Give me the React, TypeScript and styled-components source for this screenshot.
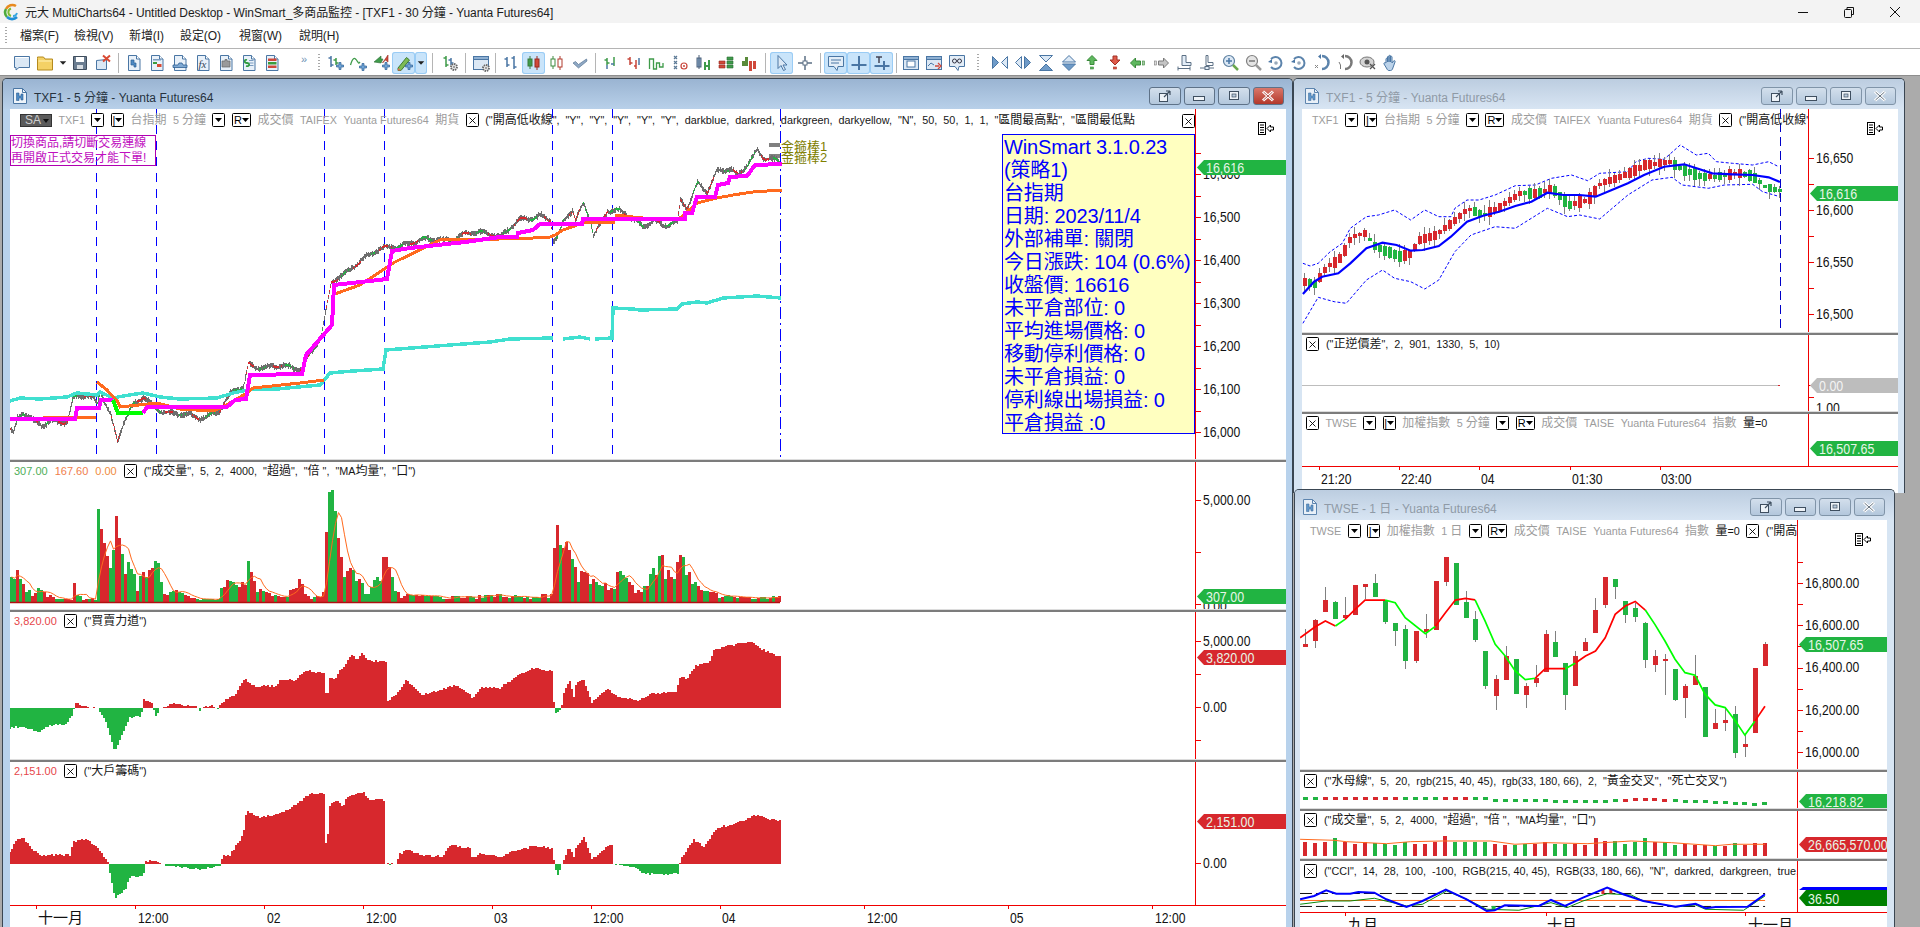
import React from 'react';
import styled, { createGlobalStyle } from 'styled-components';

type P = [number, number];
const RED = '#d7282d';
const GREEN = '#21b442';
const FONT = `"Liberation Sans", "Noto Sans CJK TC", sans-serif`;

/* ---------- data helpers ---------- */
const rng = (seed: number) => () => {
  seed |= 0; seed = (seed + 0x6d2b79f5) | 0;
  let t = Math.imul(seed ^ (seed >>> 15), 1 | seed);
  t = (t + Math.imul(t ^ (t >>> 7), 61 | t)) ^ t;
  return ((t ^ (t >>> 14)) >>> 0) / 4294967296;
};
const conv = (ox: number, oy: number, sx: number, sy: number) => (pts: P[]): P[] =>
  pts.map(([x, y]) => [ox + x / sx, oy + y / sy] as P);
const z8 = conv(0, 600, 3, 3);
const z10 = conv(1290, 120, 2.486, 3);
const z11 = conv(1290, 540, 2.486, 3);
const z12 = conv(500, 580, 1.96, 3);
const z6 = conv(1290, 750, 2.486, 3);
const lerp = (s: P[], x: number) => {
  if (x <= s[0][0]) return s[0][1];
  for (let i = 1; i < s.length; i++) {
    if (x <= s[i][0]) {
      const [a, b] = s[i - 1];
      const [c, d] = s[i];
      return c === a ? d : b + ((d - b) * (x - a)) / (c - a);
    }
  }
  return s[s.length - 1][1];
};
const poly = (s: P[]) => 'M' + s.map((p) => `${p[0].toFixed(1)} ${p[1].toFixed(1)}`).join('L');

/* ---------- main price chart ---------- */
const mPrice: P[] = [[10,427],[13,432],[17,417],[23,412],[33,423],[42,427],[50,420],[67,420],[73,398],[87,397],[97,403],[100,390],[110,413],[117,440],[123,423],[133,407],[143,397],[157,407],[173,415],[200,417],[220,410],[233,392],[243,387],[248,363],[267,368],[300,367],[321,337],[331,284],[355,263],[392,245],[441,239],[490,232],[500,235],[517,223],[533,218],[540,214],[550,218],[553,240],[557,238],[563,223],[572,212],[575,222],[583,203],[590,218],[593,233],[600,223],[607,211],[620,213],[633,218],[643,225],[653,220],[663,228],[677,222],[680,200],[687,205],[697,182],[707,193],[717,173],[730,168],[738,173],[757,153],[763,160],[777,160],[781,163]];
const mMag1: P[] = [[10,419],[75,419],[77,408],[99,408],[101,400],[113,400]];
const mGreen: P[] = [[113,400],[118,413],[143,413]];
const mMag2: P[] = [[143,413],[147,407],[227,407],[235,400],[246,399],[250,375],[302,374],[305,360],[306,355],[332,325],[334,285],[387,279],[392,251],[410,248],[465,242],[500,237],[517,237],[518,233],[533,230],[540,224],[582,224],[583,219],[685,219],[685,213],[692,213],[697,197],[715,197],[718,185],[728,183],[730,177],[747,176],[755,165],[782,164]];
const mOr1: P[] = [[10,419],[77,417],[96,417]];
const mOr2: P[] = [[97,382],[107,390],[118,402],[120,407],[157,403],[180,409],[213,411],[223,407],[247,393],[253,388],[300,383],[324,380]];
const mOr3: P[] = [[332,295],[360,285],[395,262],[440,240],[500,239],[517,239],[550,237],[555,235],[563,230],[580,224],[587,222],[615,222]];
const mOr4: P[] = [[615,215],[633,217],[643,218],[680,218],[697,203],[717,198],[733,195],[753,192],[782,190]];
const mCy1: P[] = [[10,401],[20,398],[40,399],[67,397],[77,393],[97,395],[100,392],[113,398],[123,396],[143,393],[160,397],[180,399],[217,398],[233,393],[253,389],[277,389],[320,385],[330,373],[353,371],[383,369],[386,350],[450,345],[490,342],[510,339],[553,338]];
const mCy2: P[] = [[563,339],[580,337],[590,339]];
const mCy3: P[] = [[595,339],[612,338],[613,308],[633,309],[640,310],[677,309],[682,304],[697,302],[707,303],[723,298],[757,296],[781,298]];

const miniBars = (() => {
  const r = rng(7);
  let w = '', u = '', d = '';
  for (let x = 10; x <= 780; x += 1) {
    const wob = Math.sin(x / 3.1) * 1.6 + Math.sin(x / 7.7) * 2.2;
    const c = lerp(mPrice, x) + wob;
    const hi = c - 1 - r() * 2.5;
    const lo = c + 1 + r() * 2.5;
    w += `M${x} ${hi.toFixed(0)}V${lo.toFixed(0)}`;
    const b = `M${x} ${(c - 1).toFixed(0)}V${(c + 1).toFixed(0)}`;
    const k = Math.sin(x / 4.3) + (r() - 0.5);
    if (k > 0.55) u += b; else if (k < -0.65) d += b;
  }
  return { w, u, d };
})();

/* ---------- volume ---------- */
const volEnv: P[] = [[10,25],[15,35],[20,20],[30,10],[35,15],[50,6],[60,3],[70,3],[72,25],[75,8],[85,3],[94,5],[96,100],[100,73],[105,50],[110,30],[115,86],[120,50],[125,40],[130,40],[135,20],[143,32],[150,32],[156,45],[162,8],[175,12],[190,4],[200,3],[218,3],[222,25],[230,20],[243,20],[245,48],[250,30],[255,15],[265,10],[280,5],[288,5],[290,20],[297,25],[310,3],[322,10],[327,110],[332,112],[336,70],[340,45],[345,30],[350,35],[360,20],[370,15],[382,45],[385,45],[395,12],[400,8],[430,6],[470,6],[500,8],[530,5],[550,10],[555,84],[560,50],[565,60],[575,32],[585,30],[600,15],[618,32],[628,20],[640,10],[660,50],[670,25],[680,50],[690,25],[700,12],[720,8],[740,5],[760,5],[780,6]];
const VOL_BASE = 602;
const volume = (() => {
  const r = rng(21);
  const red: string[] = [];
  const grn: string[] = [];
  const ma: P[] = [];
  const hs: number[] = [];
  for (let x = 10; x <= 778; x += 3) {
    const k = r();
    const env = lerp(volEnv, x);
    const h = env * (env > 42 || k > 0.4 ? 1 : 0.45 + k);
    hs.push(h);
    const s = `M${x + 1.5} ${VOL_BASE}V${(VOL_BASE - h).toFixed(0)}`;
    (r() > 0.45 ? red : grn).push(s);
    const w = hs.slice(-5);
    ma.push([x + 1.5, VOL_BASE - (w.reduce((a, b) => a + b, 0) / w.length)]);
  }
  return { red: red.join(''), grn: grn.join(''), ma };
})();

/* ---------- area panes ---------- */
const force: P[] = [
  ...z8([[30,385],[60,380],[120,395],[150,375],[200,372],[218,345],[222,325],[226,312],[265,318],[270,323],[295,325],[320,370],[345,455],[370,395],[390,350],[420,350],[428,330],[430,298],[456,310],[468,348],[480,325],[520,310],[590,318],[600,330],[610,322],[640,315],[650,330],[670,305],[710,280],[735,235],[770,265],[790,255],[830,260],[840,240],[890,240],[905,220],[930,213],[975,220],[978,280],[988,280],[990,235],[1005,240],[1020,210],[1030,200],[1055,165],[1075,180],[1088,155],[1100,180],[1158,187],[1160,305],[1190,280],[1220,240],[1265,285],[1300,275],[1350,260],[1365,255],[1410,280],[1418,300],[1445,260]]),
  ...z12([[0,325],[30,290],[70,262],[105,275],[106,383],[106,425],[110,400],[120,388],[125,340],[137,300],[145,355],[150,305],[165,300],[180,370],[200,340],[212,325],[230,348],[270,362],[300,340],[345,335],[355,285],[365,300],[385,255],[410,250],[420,210],[445,198],[490,186],[520,213],[552,232]]),
];
const chips: P[] = [
  ...z8([[30,755],[50,720],[70,712],[100,750],[120,765],[210,765],[220,725],[260,715],[295,745],[320,780],[325,792],[345,895],[375,870],[395,825],[415,835],[432,820],[435,785],[460,780],[490,792],[520,800],[600,808],[660,798],[670,765],[690,765],[730,705],[740,632],[770,650],[820,648],[860,630],[890,615],[900,605],[930,580],[975,580],[978,730],[985,700],[990,615],[1010,600],[1030,620],[1040,590],[1090,577],[1110,600],[1150,597],[1157,615],[1158,792],[1190,792],[1200,762],[1220,750],[1265,765],[1330,770],[1350,735],[1410,745],[1418,778],[1440,760]]),
  ...z12([[0,830],[30,812],[70,797],[105,805],[106,851],[113,885],[122,851],[125,845],[135,798],[145,830],[150,800],[165,772],[180,838],[200,815],[213,793],[222,800],[222,851],[260,860],[280,880],[320,885],[352,880],[353,840],[380,780],[400,800],[425,745],[465,728],[505,703],[525,717],[552,722]]),
];
const area = (s: P[], zero: number, seed: number) => {
  const r = rng(seed);
  let up = '', dn = '';
  for (let x = 10; x <= 781; x += 2) {
    const y = Math.round(lerp(s, x) + (r() - 0.5) * 2);
    if (y < zero) up += `M${x} ${zero}V${y}`;
    else if (y > zero) dn += `M${x} ${zero}V${y}`;
  }
  return { up, dn };
};
const forceA = area(force, 708, 3);
const chipsA = area(chips, 864, 5);

/* ---------- window 2 ---------- */
const w2Mid = z10([[32,522],[60,485],[80,470],[120,460],[150,430],[190,385],[230,368],[265,375],[300,392],[330,390],[370,378],[400,350],[440,305],[480,287],[520,275],[560,258],[600,245],[640,218],[680,225],[720,225],[760,230],[800,210],[840,190],[880,165],[930,140],[980,133],[1050,160],[1100,163],[1150,165],[1190,172],[1218,186]]);
const w2Up = z10([[32,430],[50,438],[70,430],[100,395],[130,370],[150,325],[190,290],[220,285],[260,270],[300,300],[335,270],[370,290],[400,290],[410,265],[440,240],[470,240],[510,225],[560,197],[610,195],[650,175],[700,165],[740,182],[770,160],[840,155],[860,125],[890,115],[930,118],[970,75],[1010,105],[1040,100],[1060,125],[1100,130],[1150,135],[1190,125],[1215,140]]);
const w2Lo = z10([[32,610],[70,532],[110,545],[140,550],[190,480],[230,450],[260,475],[300,485],[335,507],[370,480],[410,395],[450,345],[510,320],[560,325],[640,265],[690,290],[720,285],[770,297],[840,225],[900,180],[950,172],[975,195],[1040,205],[1080,195],[1150,193],[1175,215],[1218,230]]);
const w2Path = z10([[36,485],[60,495],[90,440],[120,420],[135,390],[150,350],[185,340],[210,380],[250,400],[270,410],[300,400],[320,360],[360,345],[410,300],[440,265],[480,285],[520,260],[570,220],[620,220],[650,205],[690,255],[740,240],[770,190],[810,175],[850,155],[880,135],[940,125],[970,145],[1020,170],[1060,170],[1110,158],[1150,170],[1180,200],[1218,212]]);
const w2Candles = (() => {
  const r = rng(11);
  const out: { x: number; hi: number; lo: number; top: number; bot: number; up: boolean }[] = [];
  let prev = lerp(w2Path, 1304);
  for (let x = 1304; x <= 1780; x += 5) {
    const c = lerp(w2Path, x);
    const up = c < prev + (r() - 0.5) * 3;
    const h = 3 + r() * 9;
    const top = Math.round(c - h / 2);
    const bot = Math.round(c + h / 2);
    out.push({ x, top, bot, up, hi: top - Math.round(r() * 8), lo: bot + Math.round(r() * 8) });
    prev = c;
  }
  return out;
})();

/* ---------- window 3 ---------- */
const w3Raw: [number, number, number, number, number, 'r' | 'g'][] = [
  [38,265,318,309,317,'r'],[63,235,320,237,299,'r'],[88,138,212,178,212,'r'],[113,181,234,184,233,'g'],[137,168,235,222,232,'r'],[162,133,222,133,222,'r'],[187,129,175,129,138,'r'],[212,99,168,127,167,'g'],[237,178,248,180,243,'g'],[262,247,315,247,269,'g'],[287,252,383,264,359,'g'],[312,270,365,270,359,'r'],[337,218,290,265,272,'r'],[362,120,267,120,266,'r'],[387,48,134,48,122,'r'],[412,65,192,65,192,'g'],[437,150,230,183,230,'g'],[461,210,303,235,297,'g'],[486,330,443,330,434,'g'],[511,402,506,414,464,'r'],[536,315,417,345,417,'r'],[561,354,458,354,458,'g'],[586,425,500,435,461,'r'],[611,372,437,410,425,'r'],[636,267,392,280,392,'r'],[661,270,348,303,348,'g'],[686,366,506,366,461,'g'],[711,330,434,345,434,'r'],[736,292,330,303,329,'r'],[761,170,275,207,275,'r'],[785,108,200,108,191,'r'],[810,113,173,113,137,'g'],[835,180,245,180,221,'g'],[860,185,243,201,228,'g'],[885,243,380,246,356,'g'],[909,326,392,345,371,'r'],[934,340,462,354,360,'r'],[959,384,480,384,477,'g'],[984,430,530,435,470,'r'],[1009,342,430,405,431,'r'],[1034,438,588,438,588,'g'],[1059,503,565,546,563,'r'],[1084,500,570,537,545,'r'],[1109,495,650,519,635,'g'],[1133,583,648,609,617,'r'],[1158,381,575,381,575,'r'],[1183,303,375,309,375,'r'],
];
const maSegs: { c: string; p: P[] }[] = [
  { c: '#ff0000', p: [[25,290],[62,258],[88,240],[113,255]] },
  { c: '#00ff00', p: [[113,255],[137,235]] },
  { c: '#ff0000', p: [[137,235],[162,205],[187,177],[237,177]] },
  { c: '#00ff00', p: [[237,177],[262,185],[287,230],[337,278],[362,256]] },
  { c: '#ff0000', p: [[362,256],[387,215],[412,177],[437,172],[461,176]] },
  { c: '#00ff00', p: [[461,176],[486,240],[511,310],[536,345],[561,390],[586,416],[611,412]] },
  { c: '#ff0000', p: [[611,412],[636,383],[686,383]] },
  { c: '#00ff00', p: [[686,383],[711,366]] },
  { c: '#ff0000', p: [[711,366],[736,345],[761,330],[785,290],[810,220],[835,195],[860,181],[885,207]] },
  { c: '#00ff00', p: [[885,207],[909,250],[934,300],[959,355],[984,395],[1009,403],[1034,460],[1059,492],[1084,500],[1109,540],[1133,583],[1158,541]] },
  { c: '#ff0000', p: [[1158,541],[1183,496]] },
];
const jellyY = [141,141,141,141,141,141,141,141,141,141,142,142,142,142,141,141,141,141,141,146,147,148,148,148,148,149,149,149,150,150,149,147,146,145,143,143,146,146,149,150,151,152,154,155,157,158,155];
const jellyG = new Set([0,1,10,11,12,13,17,18,19,20,21,22,23,24,25,26,27,28,29,30,31,37,38,39,40,41,42,43,44,45,46]);
const w3Xs = w3Raw.map((c) => 1290 + c[0] / 2.486);
const volTops = [272,275,272,262,272,280,274,276,280,282,274,278,278,274,255,272,272,272,272,278,282,282,280,278,273,278,278,278,282,262,270,270,280,272,262,274,274,282,278,282,282,285,285,277,281,277,277];
const volCols = 'rrrgrrrggggrrrrggggrrggrrggrrrrggggrggrrrgrgrrr';
const volMa = z6([[25,265],[110,268],[140,272],[240,278],[300,272],[380,270],[500,270],[560,280],[640,275],[740,278],[850,270],[950,275],[1060,284],[1100,280],[1183,280]]);
const cciBlue = z6([[25,445],[60,435],[90,418],[115,428],[150,428],[170,423],[210,425],[240,445],[290,468],[330,450],[388,416],[440,445],[490,480],[510,478],[535,463],[620,465],[650,447],[685,465],[730,440],[790,410],[830,430],[880,450],[960,467],[1010,458],[1035,472],[1060,468],[1140,467],[1183,430]]);
const cciGreen = z6([[25,460],[90,450],[150,450],[210,442],[290,465],[330,460],[390,420],[440,445],[490,475],[570,478],[650,455],[690,470],[730,450],[790,428],[850,432],[880,450],[960,468],[1010,462],[1035,475],[1130,478],[1183,435]]);

/* ---------- styles ---------- */
const Global = createGlobalStyle`
  html, body { margin: 0; height: 100%; overflow: hidden; background: #ababab; }
  * { box-sizing: border-box; }
`;
const Page = styled.div`
  width: 1920px; height: 927px; overflow: hidden; display: flex; flex-direction: column;
  font-family: ${FONT}; background: #ababab; color: #000;
`;
const TitleBar = styled.header`
  height: 23px; background: #f3f3f3; display: flex; align-items: center; padding-left: 3px;
  font-size: 12px; color: #1c1c1c; flex: none;
`;
const AppTitle = styled.span`
  margin-left: 5px; white-space: pre; letter-spacing: -0.06px;
`;
const Caption = styled.div`
  margin-left: auto; display: flex; height: 100%; margin-right: 2px;
`;
const CaptionBtn = styled.div`
  width: 46px; display: flex; align-items: center; justify-content: center;
`;
const MenuBar = styled.nav`
  height: 26px; background: #fff; border-bottom: 1px solid #b4b4b4; display: flex; align-items: center;
  padding: 0 0 2px 20px; flex: none; position: relative; font-size: 12px; color: #222;
`;
const MenuItem = styled.span<{ $w: number }>`
  width: ${(p) => p.$w}px; white-space: nowrap; letter-spacing: -0.1px;
`;
const Grip = styled.i`
  display: block; width: 2px; height: 18px;
  background: repeating-linear-gradient(#a8a8a8 0 1px, transparent 1px 3px);
`;
const MenuGrip = styled(Grip)`
  position: absolute; left: 5px; top: 4px;
`;
const ToolBar = styled.div`
  height: 27px; background: #fff; border-bottom: 1px solid #8e8e8e; display: flex; align-items: center;
  padding: 1px 0 0 10.5px; flex: none;
`;
const Tool = styled.div<{ $hl?: boolean; $w?: number }>`
  width: ${(p) => p.$w ?? 23}px; height: 22px; display: flex; align-items: center; justify-content: center;
  border-radius: 3px; flex: none;
  ${(p) => p.$hl && 'background: #c9e4fa; box-shadow: inset 0 0 0 1px #9accf5;'}
`;
const ToolSep = styled.div<{ $w: number }>`
  width: ${(p) => p.$w}px; height: 20px; flex: none; display: flex; justify-content: center;
  &::before { content: ''; width: 1px; background: #b5b5b5; }
`;
const ToolGrip = styled.div<{ $w: number }>`
  width: ${(p) => p.$w}px; flex: none; display: flex; justify-content: center;
`;
const Chevron = styled.span`
  width: 31.5px; font-size: 11px; color: #6d8fb3; text-align: right; padding-right: 8px; flex: none; margin-top: -8px;
`;
const Mdi = styled.main`
  position: relative; flex: 1; background: #ababab; overflow: hidden;
`;
const Win = styled.section<{ $l: number; $t: number; $w: number; $h: number; $active?: boolean; $pl: number; $pr: number; $z: number }>`
  position: absolute; left: ${(p) => p.$l}px; top: ${(p) => p.$t}px; width: ${(p) => p.$w}px; height: ${(p) => p.$h}px;
  z-index: ${(p) => p.$z};
  padding: 0 ${(p) => p.$pr}px 0 ${(p) => p.$pl}px;
  background: ${(p) => (p.$active ? '#b8d2ec' : '#d7e5f3')};
  border: 1px solid #3a4652; border-bottom: 0; border-radius: 5px 5px 0 0;
  display: flex; flex-direction: column; overflow: hidden;
`;
const WinTitle = styled.div<{ $active?: boolean; $pl: number; $pb: number }>`
  height: 30px; flex: none; margin: 0 -${(p) => p.$pb}px 0 -${(p) => p.$pl}px; padding: 4px ${(p) => p.$pb}px 0 ${(p) => p.$pl + 1}px;
  display: flex; align-items: center; font-size: 12px; white-space: pre;
  background: linear-gradient(${(p) => (p.$active ? '#9ab4d2, #b8d0e9' : '#bccde0, #d8e5f3')});
  color: ${(p) => (p.$active ? '#26323e' : '#8f9aa6')};
`;
const WinName = styled.span`
  margin-left: 5px;
`;
const WinBtns = styled.div`
  margin-left: auto; display: flex; gap: 3px; margin-right: 2px;
`;
const WinBtn = styled.div<{ $close?: boolean; $active?: boolean }>`
  width: 31.5px; height: 18px; border: 1px solid ${(p) => (p.$active ? '#5e7288' : '#8094a8')}; border-radius: 3px;
  display: flex; align-items: center; justify-content: center;
  background: ${(p) => (p.$close && p.$active ? 'linear-gradient(#d9776a, #b3382b)' : 'linear-gradient(#d3dfec, #b3c7dc)')};
`;
const Body = styled.div`
  flex: 1; display: flex; flex-direction: column; background: #fff; min-height: 0;
`;
const Pane = styled.div<{ $h: number; $axis: number }>`
  height: ${(p) => p.$h}px; flex: none; display: grid; grid-template-columns: minmax(0, 1fr) ${(p) => p.$axis}px;
`;
const Plot = styled.div`
  position: relative; overflow: hidden; min-width: 0;
`;
const Chart = styled.svg`
  position: absolute; left: 0; top: 0; width: 100%; height: 100%; display: block;
`;
const Axis = styled.div`
  position: relative; overflow: hidden; border-left: 1px solid #f00000;
`;
const AxisLabel = styled.span`
  position: absolute; left: 7px; font-size: 14px; line-height: 14px; white-space: nowrap; color: #111;
  transform: translateY(-50%) scaleX(0.87); transform-origin: left center;
`;
const AxisTicks = styled.svg`
  position: absolute; left: 0; top: 0; width: 8px; height: 100%;
`;
const Tag = styled.div<{ $bg: string }>`
  position: absolute; left: 1px; right: 0; height: 15px; background: ${(p) => p.$bg}; z-index: 2; overflow: hidden;
  clip-path: polygon(7px 0, 100% 0, 100% 100%, 7px 100%, 0 50%);
`;
const TagText = styled.span<{ $color?: string }>`
  position: absolute; left: 9px; top: 0; font-size: 15px; line-height: 15px; color: ${(p) => p.$color ?? '#e8f6e8'}; white-space: nowrap;
  transform: scaleX(0.83); transform-origin: left center;
`;
const TagCap = styled.div`
  position: absolute; left: 1px; right: 0; height: 3px; background: #0000ff; z-index: 3;
  clip-path: polygon(4px 0, 100% 0, 100% 100%, 0 100%);
`;
const PaneTool = styled.div<{ $left: number; $top: number }>`
  position: absolute; left: ${(p) => p.$left}px; top: ${(p) => p.$top}px; width: 17px; height: 13px; z-index: 3;
`;
const Legend = styled.div<{ $top: number; $left: number; $gap?: number }>`
  position: relative; z-index: 2; display: flex; align-items: center; gap: ${(p) => p.$gap ?? 6.5}px;
  padding: ${(p) => p.$top}px 0 0 ${(p) => p.$left}px; white-space: pre; font-size: 10.8px; line-height: 13px;
`;
const Muted = styled.span`
  color: #9c9c9c;
`;
const Ink = styled.span`
  color: #161616;
`;
const Val = styled.span<{ $c: string }>`
  color: ${(p) => p.$c}; font-size: 11px;
`;
const Cjk = styled.span`
  font-size: 12px;
`;
const SmallBox = styled.span<{ $w?: number }>`
  width: ${(p) => p.$w ?? 13}px; height: 14px; flex: none; background: #fff; border: 1px solid #000; border-radius: 1.5px;
  display: inline-flex; align-items: center; justify-content: center; font-size: 11px; line-height: 12px; color: #000;
`;
const SaBtn = styled.span`
  width: 32px; height: 13px; background: #5b5b5b; border: 1px solid #333; display: inline-flex; flex: none; align-items: center;
  color: #cfcfcf; font-size: 12px; padding-left: 4px;
  position: relative;
  &::after { content: ''; position: absolute; right: 2px; top: 4px; border: 3px solid transparent; border-top: 4px solid #111; border-bottom: 0; }
`;
const CloseCorner = styled(SmallBox)`
  position: absolute; right: 0; top: 5px; z-index: 3;
`;
const InfoBox = styled.div`
  position: absolute; right: 0; top: 25px; width: 193px; height: 300px; background: #ffffc0; border: 1px solid #0000ff;
  color: #0000ff; font-size: 20px; line-height: 23px; padding: 1px 0 0 1px; z-index: 3; white-space: pre; overflow: hidden;
  letter-spacing: -0.15px;
`;
const InfoLine = styled.div``;
const Warn = styled.div`
  position: absolute; left: 0; top: 26px; width: 146px; height: 31px; border: 1px solid #b000b0;
  color: #c010c0; font-size: 12px; line-height: 15px; white-space: nowrap; z-index: 1; letter-spacing: 0;
`;
const Gold = styled.span<{ $top: number }>`
  position: absolute; left: 771px; top: ${(p) => p.$top}px; font-size: 13px; line-height: 13px; color: #808000; z-index: 2; white-space: nowrap;
`;
const Divider = styled.div`
  height: 3px; flex: none; background: #7c7c7c; border-top: 1px solid #dcdcdc;
`;
const TimeAxis = styled.div<{ $h: number }>`
  height: ${(p) => p.$h}px; flex: none; position: relative; border-top: 1px solid #f00000; overflow: hidden; background: #fff;
`;
const TimeTick = styled.i`
  position: absolute; top: 0; width: 1px; height: 3px; background: #f00000;
`;
const TimeLabel = styled.span`
  position: absolute; top: 5px; font-size: 14px; line-height: 14px; color: #111; white-space: nowrap;
  transform: scaleX(0.87); transform-origin: left center;
`;
const TimeCjk = styled.span`
  position: absolute; top: 4px; font-size: 15px; line-height: 16px; color: #111; white-space: nowrap;
`;

/* ---------- text helper ---------- */
const mix = (t: string) =>
  t.split(/([\u3000-\u9fff\uff00-\uffef]+)/).map((s, i) => (i % 2 ? <Cjk key={i}>{s}</Cjk> : s));

/* ---------- icons ---------- */
const S = ({ children, w = 18, h = 18, vb }: { children: React.ReactNode; w?: number; h?: number; vb?: string }) => (
  <svg width={w} height={h} viewBox={vb ?? `0 0 ${w} ${h}`} fill="none">{children}</svg>
);
const BL = '#4a76a4';
const Doc = ({ c }: { c?: React.ReactNode }) => (
  <>
    <path d="M3.5 1.5h8l3.5 3.5v11.5H3.5z" fill="#e9f1f9" stroke={BL} />
    <path d="M11.5 1.5V5H15" fill="#fff" stroke={BL} />
    {c}
  </>
);
const Plus = ({ x = 0, y = 0 }: { x?: number; y?: number }) => (
  <path transform={`translate(${x} ${y})`} d="M10.5 11h2.5V8.500h2V11h2.500v2H15v2.500h-2V13h-2.500z" fill="#6fa3d6" stroke="#2d5f94" strokeWidth=".7" />
);
const Gear = ({ x = 0, y = 0 }: { x?: number; y?: number }) => (
  <g transform={`translate(${x} ${y})`}>
    <circle cx="13" cy="13" r="3" fill="#e8e8e8" stroke="#666" strokeWidth="1.800" strokeDasharray="1.500 .8" />
    <circle cx="13" cy="13" r="1" fill="#888" />
  </g>
);
const ohlc = (x: number, a: number, b: number, c: string, o = a + 2, e = b - 2) => (
  <path key={x + c + a} d={`M${x} ${a}V${b}M${x - 2.500} ${o}H${x}M${x} ${e}H${x + 2.500}`} stroke={c} strokeWidth="1.500" />
);
const candle = (x: number, a: number, b: number, ba: number, bb: number, c: string, fill: string) => (
  <g key={x}><path d={`M${x} ${a}V${b}`} stroke={c} /><rect x={x - 2} y={ba} width="4" height={bb - ba} fill={fill} stroke={c} /></g>
);
const WinShape = ({ c }: { c?: React.ReactNode }) => (
  <>
    <rect x="1.500" y="2.500" width="15" height="13" fill="#dce8f4" stroke={BL} />
    <rect x="1.500" y="2.500" width="15" height="3" fill="#8fb0d2" stroke={BL} />
    {c}
  </>
);
const PinUp = ({ c, s }: { c: string; s: string }) => (
  <><path d="M9 1.500l5 5h-3v4H7v-4H4z" fill={c} stroke={s} /><rect x="7.500" y="13" width="3" height="2" fill={c} stroke={s} strokeWidth=".6" /></>
);
const I: Record<string, React.ReactNode> = {
  blank: <><path d="M1.500 2.500h15v11H6l-3 2.500v-2.500H1.500z" fill="#dbe8f5" stroke={BL} /><path d="M2.500 3.500h13" stroke="#fff" /></>,
  folder: <><path d="M1.500 4.500V3h6l1.500 2h7.500v11h-15z" fill="#f4d165" stroke="#b58a1e" /><path d="M2.500 7h13" stroke="#fff2b8" /></>,
  floppy: <><path d="M2.500 2.500h13v13h-13z" fill="#6b7d90" stroke="#3f4d5c" /><rect x="5" y="3" width="8" height="5" fill="#fff" /><rect x="6" y="11" width="6" height="4" fill="#d8dde2" /></>,
  floppyX: <><path d="M2.500 6.500l10-1v10h-10z" fill="#dbe8f5" stroke={BL} /><path d="M9 1.500l7 6M16 1.500l-7 6" stroke="#d94a33" strokeWidth="2" /></>,
  docTree: <Doc c={<><path d="M6 6h3v3h2v4H9v-2H6z" fill="#4d8ac4" stroke="#2d5f94" strokeWidth=".7" /></>} />,
  docBars: <Doc c={<><rect x="5" y="5" width="8" height="1.500" fill="#7a9cc0" /><rect x="5" y="8" width="4" height="2" fill="#3c9c3c" /><rect x="9" y="10" width="4.500" height="3" fill="#d94a33" /></>} />,
  docLine: <Doc c={<><path d="M2 11h5l1-2h3l1 2h4v2.500H2z" fill="#7fa9d3" stroke="#2d5f94" strokeWidth=".8" /></>} />,
  docFx: <Doc c={<text x="4.500" y="14" fontFamily="Liberation Serif, serif" fontStyle="italic" fontSize="11" fill="#33475b">fx</text>} />,
  docPuzzle: <Doc c={<path d="M5 7h3V5.500h2V7h3v6H5z" fill="#9a9a9a" stroke="#666" strokeWidth=".7" />} />,
  docS: <Doc c={<><path d="M9 6.500h4.500M9 9h4.500M9 11.500h4.500" stroke="#7a9cc0" /><path d="M7 6c-3-1-3 3 0 3s3 4-1 3" stroke="#2f9a3f" strokeWidth="1.800" /></>} />,
  docRed: <Doc c={<><rect x="5" y="4.500" width="8.500" height="2.500" fill="#d0483a" /><rect x="5" y="8" width="8.500" height="2.500" fill="#3c9c3c" /><rect x="5" y="11.500" width="8.500" height="2.500" fill="#d0483a" /></>} />,
  barsPlus: <>{ohlc(5, 2, 13, '#4a76a4')}{ohlc(10, 4, 11, '#3f9b4a')}<Plus /></>,
  wavePlus: <><path d="M1.500 11c2-7 4-8 6-5s2 4 3.500 2" stroke="#3f9b4a" strokeWidth="1.300" /><Plus y={1} /></>,
  arrowsPlus: <><path d="M2 8l7-6 0 3 2 0-2 4z" fill="#3f9b4a" stroke="#2a6b33" strokeWidth=".6" /><path d="M16 1l0 7-2.500-2-3 3z" fill="#d0483a" stroke="#93291e" strokeWidth=".6" /><Plus /></>,
  penPlus: <><path d="M3 14L11.500 3.500l3 2.500L6 16.500H3z" fill="#7dbb55" stroke="#3f7b32" /><path d="M3 14v2.500h3z" fill="#e36a50" /><Plus /></>,
  barsGear: <>{ohlc(5, 2, 13, '#3f9b4a')}{ohlc(10, 4, 11, '#4a76a4')}<Gear /></>,
  winGear: <><WinShape /><Gear x={1} y={1} /></>,
  ohlcBlue: <>{ohlc(5, 3, 13, BL)}{ohlc(12, 2, 15, BL)}</>,
  candleFill: <>{candle(5, 2, 15, 5, 12, '#3a7a3a', '#3f9b4a')}{candle(12, 2, 16, 5, 13, '#9a2a20', '#d0483a')}</>,
  candleHollow: <>{candle(5, 2, 15, 5, 12, '#3f8a3f', '#fff')}{candle(12, 2, 16, 5, 13, '#b03a2c', '#fff')}</>,
  check: <path d="M2 9l2.500-1.500 3 3L15.500 5l.5 2-8.500 7z" fill="#8fa8c4" stroke="#5a7795" strokeWidth=".7" />,
  ohlcGreen: <>{ohlc(5, 4, 11, '#3f9b4a', 6, 9)}<path d="M12 3v9" stroke="#3f9b4a" strokeWidth="1.500" /><path d="M5 11v4M9 10h3" stroke={BL} strokeWidth="1.500" /></>,
  ohlcRed: <>{ohlc(5, 3, 11, '#c8453a', 5, 9)}<path d="M11 6v9M9 12h2" stroke="#c8453a" strokeWidth="1.500" /><path d="M14 4v7" stroke={BL} strokeWidth="1.500" /></>,
  step: <path d="M1.500 15V5h4v10h3V9h3v4h3.500V9" stroke="#3f9b4a" strokeWidth="1.300" />,
  xo: <><path d="M3 2l3 3M6 2L3 5M3 7l3 3M6 7l-3 3M3 12l3 3M6 12l-3 3" stroke="#5c7a96" strokeWidth="1.200" /><circle cx="13" cy="12" r="3" stroke="#c8453a" strokeWidth="1.200" /><circle cx="13" cy="12" r="1" fill="#c8453a" /></>,
  candleVol: <><rect x="3" y="4" width="4" height="9" fill="#8fb0d2" stroke="#4a5f78" /><path d="M5 1v14" stroke="#4a5f78" /><path d="M11 8v8M15 6v10M11 12h4" stroke="#3f9b4a" strokeWidth="2" /></>,
  bricks: <><path d="M2 7h6v3H2zM2 11h6v3H2z" fill="#d0483a" stroke="#93291e" strokeWidth=".6" /><path d="M10 3h6v3h-6zM10 7h6v3h-6zM10 11h6v3h-6z" fill="#3f9b4a" stroke="#2a6b33" strokeWidth=".6" /></>,
  rgBars: <><path d="M2 7h3v5H2zM5 3h3v9H5z" fill="#5a8a3a" /><path d="M9 7h3v10H9zM13 7h3v8h-3z" fill="#d0483a" /></>,
  cursor: <path d="M5 1.500v13l3-3 2.500 5 2-1-2.500-4.500h4z" fill="#dbe8f5" stroke={BL} />,
  cross: <><path d="M9 2v5M9 11v5M2 9h5M11 9h5" stroke="#5c7085" strokeWidth="1.500" /><rect x="7" y="7" width="4" height="4" stroke="#5c7085" /></>,
  comment: <><path d="M1.500 2.500h15v10H11l-1 4-3-4H1.500z" fill="#e3edf7" stroke={BL} /><path d="M4 6h10M4 9h8" stroke={BL} /></>,
  hline: <><path d="M1.500 11h15M9 2v14" stroke={BL} strokeWidth="2" /></>,
  textLine: <><path d="M1.500 12h15M11 7v9" stroke={BL} strokeWidth="2" /><path d="M3 3h6M6 3v6" stroke="#445" strokeWidth="1.500" /></>,
  winA: <WinShape c={<rect x="5" y="7" width="8" height="6" fill="#fff" stroke={BL} />} />,
  winB: <WinShape c={<><path d="M3 12l3-3 3 2" stroke={BL} /><path d="M10 12l4 0M13 9l3 3-3 3" stroke="#d0483a" strokeWidth="1.300" /></>} />,
  binoc: <><path d="M1.500 1.500h15v11H11l-1 4-3-4H1.500z" fill="#e3edf7" stroke={BL} /><circle cx="6.500" cy="7" r="2" stroke="#334" /><circle cx="11.500" cy="7" r="2" stroke="#334" /></>,
  navIn: <><path d="M1.500 2.500l6 6-6 6z" fill="#6f9bc8" stroke={BL} /><path d="M16.500 2.500l-6 6 6 6z" fill="#dbe8f5" stroke={BL} /></>,
  navOut: <><path d="M7.500 2.500l-6 6 6 6z" fill="#dbe8f5" stroke={BL} /><path d="M10.500 2.500l6 6-6 6z" fill="#6f9bc8" stroke={BL} /></>,
  navV1: <><path d="M2.500 1.500h13l-6.500 6.500z" fill="#dbe8f5" stroke={BL} /><path d="M2.500 16.500h13L9 10z" fill="#6f9bc8" stroke={BL} /></>,
  navV2: <><path d="M9 1.500l6.500 6.500h-13z" fill="#dbe8f5" stroke={BL} /><path d="M9 16.500L15.500 10h-13z" fill="#6f9bc8" stroke={BL} /></>,
  upG: <PinUp c="#5fb85f" s="#3a8a3a" />,
  downR: <><path d="M9 11L4 6h3V2h4v4h3z" fill="#df5a4a" stroke="#a33024" /><rect x="7.500" y="13" width="3" height="2" fill="#df5a4a" stroke="#a33024" strokeWidth=".6" /></>,
  leftG: <><path d="M1.500 9l5-5v3h5v4h-5v3z" fill="#5fb85f" stroke="#3a8a3a" /><rect x="13.500" y="7" width="2" height="4" fill="#a8c8a8" stroke="#3a8a3a" strokeWidth=".6" /></>,
  rightG: <><path d="M16.500 9l-5-5v3h-5v4h5v3z" fill="#c4c4c4" stroke="#7a7a7a" /><rect x="2.500" y="7" width="2" height="4" fill="#ddd" stroke="#7a7a7a" strokeWidth=".6" /></>,
  pin1: <><path d="M7 1.500h4v7h5v3H7zM3 14.500h12M3 12.500v4M15 12.500v4" fill="#e3edf7" stroke="#5c7085" /></>,
  pin2: <><path d="M8 1.500h2v7h5v3h-7zM2 14h5M11 14h5" stroke="#5c7085" /><rect x="7" y="12.500" width="4" height="3" fill="#e3edf7" stroke="#5c7085" /></>,
  zoomIn: <><circle cx="8" cy="7" r="5.500" fill="#dbe8f5" stroke="#5c7f9f" strokeWidth="1.200" /><path d="M5 7h6M8 4v6" stroke="#4a76a4" strokeWidth="1.500" /><path d="M12 11l5 5" stroke="#6aa84f" strokeWidth="2.500" /></>,
  zoomOut: <><circle cx="8" cy="7" r="5.500" fill="#e4e4e4" stroke="#808080" strokeWidth="1.200" /><path d="M5 7h6" stroke="#777" strokeWidth="1.500" /><path d="M12 11l5 5" stroke="#9a9a9a" strokeWidth="2.500" /></>,
  rot1: <><path d="M4 5a6 6 0 1 1 0 8" stroke="#5c84ac" strokeWidth="2" /><path d="M1 8l4-3 0 4z" fill="#4a76a4" /><circle cx="9" cy="9" r="1.800" fill="#9ab" /></>,
  rot2: <><path d="M9 2a6.500 6.500 0 0 1 0 13" stroke="#5c84ac" strokeWidth="2.500" /><path d="M8 0v5l-3-2.500z" fill="#4a76a4" /><path d="M2 11l3 3M5 11l-3 3" stroke="#888" /></>,
  rot3: <><path d="M9 2a6.500 6.500 0 0 1 0 13" stroke="#7a7a7a" strokeWidth="2.500" /><path d="M8 0v5l-3-2.500z" fill="#666" /><path d="M3 8l1.500 3v4" stroke="#777" /></>,
  eye: <><ellipse cx="8" cy="8" rx="7" ry="5" fill="#d4d4d4" stroke="#777" /><circle cx="8" cy="8" r="2.500" fill="#555" /><path d="M11 10l5 5M16 10l-5 5" stroke="#555" strokeWidth="1.300" /></>,
  hand: <path d="M4 9V5c0-1 1.500-1 1.500 0v3V3c0-1 1.500-1 1.500 0v5V2c0-1 1.500-1 1.500 0v6V3c0-1 1.500-1 1.500 0v6l1.500-2c1-1 2 0 1.500 1l-2.500 7c-.5 1-1 1.500-2 1.500H7c-1 0-1.500-.5-2-1.500L2 10c-.5-1 1-2 2-1z" fill="#bcd3ea" stroke="#4a76a4" />,
  ddn: <path d="M3 7h7l-3.500 4z" fill="#222" />,
};
const ToolIcon = ({ n, hl }: { n: string; hl?: boolean }) => (
  <Tool $hl={hl}><S>{I[n]}</S></Tool>
);
const Dd = ({ hl }: { hl?: boolean }) => (
  <Tool $hl={hl} $w={12}><S w={13} h={18}>{I.ddn}</S></Tool>
);

const Arrow = () => <S w={7} h={4}><path d="M0 0h7L3.500 4z" fill="#000" /></S>;
const BoxX = () => <S w={9} h={9}><path d="M1.500 1.500l6 6M7.500 1.500l-6 6" stroke="#000" strokeWidth=".9" /></S>;
const ArrowBox = () => <SmallBox><Arrow /></SmallBox>;
const BarBox = () => <SmallBox>|<Arrow /></SmallBox>;
const RBox = () => <SmallBox $w={19}>R<Arrow /></SmallBox>;
const XBox = () => <SmallBox><BoxX /></SmallBox>;

const PaneToolIcon = () => (
  <S w={17} h={13}>
    <rect x=".5" y=".5" width="7" height="12" fill="#fff" stroke="#000" />
    <path d="M2 3h4M2 5.500h4M2 8h4M2 10.500h4" stroke="#000" />
    <path d="M9 6.500l3.500-3.500v2h3v3h-3v2z" fill="#fff" stroke="#000" />
  </S>
);
const TitleDoc = ({ dim }: { dim?: boolean }) => (
  <S w={18} h={18}>
    <g opacity={dim ? 0.85 : 1}>
      <path d="M2.500 1.500h9l4 4v11h-13z" fill="#eef4fa" stroke="#4a76a4" />
      <path d="M11.500 1.500v4h4" stroke="#4a76a4" />
      <path d="M5.500 6h2.500v3h2v-2h2v6h-2v-2h-2v2.500H5.500z" fill="#4d8ac4" stroke="#2d5f94" strokeWidth=".6" />
    </g>
  </S>
);
const WinButtons = ({ active }: { active?: boolean }) => {
  const c = '#3f4f60';
  return (
    <WinBtns>
      <WinBtn $active={active}><S w={16} h={14}><rect x="2.500" y="4.500" width="8" height="8" fill="#eef3f8" stroke={c} /><path d="M7 8l6-6M13 2v4M13 2H9" stroke={c} strokeWidth="1.200" /></S></WinBtn>
      <WinBtn $active={active}><S w={14} h={12}><rect x="1.500" y="6.500" width="11" height="4" fill="#eef3f8" stroke={c} /></S></WinBtn>
      <WinBtn $active={active}><S w={14} h={12}><rect x="2.500" y="1.500" width="9" height="8" fill="#eef3f8" stroke={c} /><rect x="5" y="4" width="4" height="3" fill="#b9cbdd" stroke={c} strokeWidth=".7" /></S></WinBtn>
      <WinBtn $active={active} $close><S w={14} h={12}><path d="M2 1.500l10 9M12 1.500l-10 9" stroke="#fff" strokeWidth="3" /><path d="M2.500 2l9 8M11.500 2l-9 8" stroke={active ? '#a33024' : c} strokeWidth=".8" /></S></WinBtn>
    </WinBtns>
  );
};

const Ticks = ({ top, ys, len = 5 }: { top: number; ys: number[]; len?: number }) => (
  <AxisTicks>
    <path d={ys.map((y) => `M0 ${(y - top).toFixed(0)}.5H${len}`).join('')} stroke="#f00000" />
  </AxisTicks>
);
const Lbl = ({ top, y, t }: { top: number; y: number; t: string }) => (
  <AxisLabel style={{ top: y - top }}>{t}</AxisLabel>
);
const PriceTag = ({ top, y, t, bg, color }: { top: number; y: number; t: string; bg: string; color?: string }) => (
  <Tag $bg={bg} style={{ top: y - top }}><TagText $color={color}>{t}</TagText></Tag>
);

const range = (a: number, step: number, n: number) => Array.from({ length: n }, (_, i) => a + i * step);
const INDI = `("開高低收線",  "Y",  "Y",  "Y",  "Y",  "Y",  darkblue,  darkred,  darkgreen,  darkyellow,  "N",  50,  50,  1,  1,  "區間最高點",  "區間最低點`;
const INFO = ['WinSmart 3.1.0.23', '(策略1)', '台指期', '日期: 2023/11/4', '外部補單: 關閉', '今日漲跌: 104 (0.6%)', '收盤價: 16616', '未平倉部位: 0', '平均進場價格: 0', '移動停利價格: 0', '未平倉損益: 0', '停利線出場損益: 0', '平倉損益 :0'];
const MENU: [string, number][] = [['檔案(F)', 54], ['檢視(V)', 55], ['新增(I)', 51], ['設定(O)', 59], ['視窗(W)', 60], ['說明(H)', 60]];
const VLINES = [96.5, 156.5, 324.5, 384.5, 552.5, 612.5];
const MAIN_TIME: [number, string][] = [[138, '12:00'], [267, '02'], [366, '12:00'], [494, '03'], [593, '12:00'], [722, '04'], [867, '12:00'], [1010, '05'], [1155, '12:00']];
const MAIN_TICKS = [36, 135, 264, 363, 492, 591, 720, 864, 1008, 1152];

const TX = () => (
  <>
    <ArrowBox /><BarBox />
  </>
);

export default function App() {
  return (
    <Page>
      <Global />
      <TitleBar>
        <S w={17} h={18}>
          <path d="M13 3A7 7 0 0 0 3 6" stroke="#e88a1f" strokeWidth="2.600" />
          <path d="M3 6a7 7 0 0 0 1 8" stroke="#4dab3d" strokeWidth="2.600" />
          <path d="M4 14a7 7 0 0 0 10 0" stroke="#1f8fd6" strokeWidth="2.600" />
          <path d="M8 5.500a4 4 0 0 0 0 7.500" stroke="#7dbb34" strokeWidth="2" />
          <path d="M10 13a4 4 0 0 0 4-3" stroke="#36a6e0" strokeWidth="1.800" />
        </S>
        <AppTitle>元大 MultiCharts64 - Untitled Desktop - WinSmart_多商品監控 - [TXF1 - 30 分鐘 - Yuanta Futures64]</AppTitle>
        <Caption>
          <CaptionBtn><S w={12} h={12}><path d="M1 6.500h10" stroke="#111" /></S></CaptionBtn>
          <CaptionBtn><S w={12} h={12}><rect x="1.500" y="3.500" width="7" height="8" rx="1" stroke="#111" /><path d="M4 3.500V1.500h6.500v7H8.500" stroke="#111" /></S></CaptionBtn>
          <CaptionBtn><S w={12} h={12}><path d="M1 1l10 10M11 1L1 11" stroke="#111" /></S></CaptionBtn>
        </Caption>
      </TitleBar>
      <MenuBar>
        <MenuGrip />
        {MENU.map(([t, w]) => <MenuItem key={t} $w={w}>{t}</MenuItem>)}
      </MenuBar>
      <ToolBar>
        <ToolIcon n="blank" /><Tool><S>{I.folder}</S></Tool><Dd /><ToolIcon n="floppy" /><ToolIcon n="floppyX" />
        <ToolSep $w={8} />
        <ToolIcon n="docTree" /><ToolIcon n="docBars" /><ToolIcon n="docLine" /><ToolIcon n="docFx" /><ToolIcon n="docPuzzle" /><ToolIcon n="docS" /><ToolIcon n="docRed" />
        <Chevron>»</Chevron>
        <ToolGrip $w={8}><Grip /></ToolGrip>
        <ToolIcon n="barsPlus" /><ToolIcon n="wavePlus" /><ToolIcon n="arrowsPlus" /><ToolIcon n="penPlus" hl /><Dd hl />
        <ToolSep $w={11} />
        <ToolIcon n="barsGear" />
        <ToolSep $w={8} />
        <ToolIcon n="winGear" />
        <ToolSep $w={7} />
        <ToolIcon n="ohlcBlue" /><ToolIcon n="candleFill" hl /><ToolIcon n="candleHollow" /><ToolIcon n="check" />
        <ToolSep $w={8} />
        <ToolIcon n="ohlcGreen" /><ToolIcon n="ohlcRed" /><ToolIcon n="step" /><ToolIcon n="xo" /><ToolIcon n="candleVol" /><ToolIcon n="bricks" /><ToolIcon n="rgBars" />
        <ToolSep $w={10} />
        <ToolIcon n="cursor" hl /><ToolIcon n="cross" />
        <ToolSep $w={8} />
        <ToolIcon n="comment" hl /><ToolIcon n="hline" hl /><ToolIcon n="textLine" hl />
        <ToolSep $w={6} />
        <ToolIcon n="winA" /><ToolIcon n="winB" /><ToolIcon n="binoc" />
        <ToolGrip $w={20}><Grip /></ToolGrip>
        {['navIn', 'navOut', 'navV1', 'navV2', 'upG', 'downR', 'leftG', 'rightG', 'pin1', 'pin2', 'zoomIn', 'zoomOut', 'rot1', 'rot1', 'rot2', 'rot3', 'eye', 'hand'].map((n, i) => <ToolIcon key={i} n={n} />)}
      </ToolBar>

      <Mdi>
        {/* active main window */}
        <Win $l={2} $t={2} $w={1291} $h={860} $pl={7} $pr={6} $active $z={1}>
          <WinTitle $active $pl={7} $pb={6}>
            <TitleDoc /><WinName>TXF1 - 5 分鐘 - Yuanta Futures64</WinName>
            <WinButtons active />
          </WinTitle>
          <Body>
            <Pane $h={350} $axis={91}>
              <Plot>
                <Chart viewBox="10 109 1185 350">
                  {VLINES.map((x) => <path key={x} d={`M${x} 109V459`} stroke="#0000ff" strokeWidth="1" strokeDasharray="9 7" shapeRendering="crispEdges" />)}
                  <path d="M780.500 109V459" stroke="#0000ff" strokeWidth="1" strokeDasharray="12 4 2 4" shapeRendering="crispEdges" />
                  <path d="M769 145h11M769 156h11" stroke="#808080" strokeWidth="4" />
                  <g strokeWidth="1" shapeRendering="crispEdges">
                    <path d={miniBars.w} stroke="#6e6e6e" />
                    <path d={miniBars.u} stroke="#d7282d" />
                    <path d={miniBars.d} stroke="#21b442" />
                  </g>
                  <g fill="none" strokeLinejoin="miter" shapeRendering="crispEdges">
                    {[mCy1, mCy2, mCy3].map((s, i) => <path key={i} d={poly(s)} stroke="#40e0d0" strokeWidth="3.500" />)}
                    {[mOr1, mOr2, mOr3, mOr4].map((s, i) => <path key={i} d={poly(s)} stroke="#ff6a1e" strokeWidth="3" />)}
                    <path d={poly(mMag1)} stroke="#ff00ff" strokeWidth="4" />
                    <path d={poly(mGreen)} stroke="#00ff00" strokeWidth="4" />
                    <path d={poly(mMag2)} stroke="#ff00ff" strokeWidth="4" />
                  </g>
                </Chart>
                <Legend $top={4} $left={10}>
                  <SaBtn>SA</SaBtn>
                  <Muted>TXF1</Muted><TX />
                  <Muted>{mix('台指期')}</Muted><Muted>{mix('5 分鐘')}</Muted><ArrowBox /><RBox />
                  <Muted>{mix('成交價')}</Muted><Muted>TAIFEX</Muted><Muted>Yuanta Futures64</Muted><Muted>{mix('期貨')}</Muted>
                  <XBox /><Ink>{mix(INDI)}</Ink>
                </Legend>
                <CloseCorner><BoxX /></CloseCorner>
                <Warn>切換商品,請切斷交易連線<br />再開啟正式交易才能下單!</Warn>
                <Gold $top={31}>金箍棒1</Gold>
                <Gold $top={42}>金箍棒2</Gold>
                <InfoBox>{INFO.map((l) => <InfoLine key={l}>{l}</InfoLine>)}</InfoBox>
              </Plot>
              <Axis>
                <Ticks top={109} ys={range(152.5, 21.5, 14)} />
                {[[174, '16,600'], [217, '16,500'], [260, '16,400'], [303, '16,300'], [346, '16,200'], [389, '16,100'], [432, '16,000']].map(([y, t]) => <Lbl key={t} top={109} y={y as number} t={t as string} />)}
                <PriceTag top={109} y={160} t="16,616" bg={GREEN} />
                <PaneTool $left={62} $top={12}><PaneToolIcon /></PaneTool>
              </Axis>
            </Pane>
            <Divider />
            <Pane $h={147} $axis={91}>
              <Plot>
                <Chart viewBox="10 462 1185 147">
                  <g shapeRendering="crispEdges" strokeWidth="3">
                    <path d={volume.red} stroke={RED} />
                    <path d={volume.grn} stroke={GREEN} />
                  </g>
                  <path d={poly(volume.ma)} stroke="#ff6a1e" fill="none" strokeWidth="1" />
                  <path d="M10 602.500H780" stroke="#b01010" strokeWidth="1.500" />
                </Chart>
                <Legend $top={2} $left={4} $gap={7}>
                  <Val $c="#4fae5a">307.00</Val><Val $c="#ef7d4c">167.60</Val><Val $c="#ef8c3c">0.00</Val>
                  <XBox /><Ink>{mix('("成交量",  5,  2,  4000,  "超過",  "倍 ",  "MA均量",  "口")')}</Ink>
                </Legend>
              </Plot>
              <Axis>
                <Ticks top={462} ys={[500, 552, 604]} />
                <Lbl top={462} y={500} t="5,000.00" />
                <Lbl top={462} y={606} t="0.00" />
                <PriceTag top={462} y={589} t="307.00" bg={GREEN} />
              </Axis>
            </Pane>
            <Divider />
            <Pane $h={147} $axis={91}>
              <Plot>
                <Chart viewBox="10 612 1185 147">
                  <g strokeWidth="2" shapeRendering="crispEdges">
                    <path d={forceA.up} stroke={RED} />
                    <path d={forceA.dn} stroke={GREEN} />
                  </g>
                </Chart>
                <Legend $top={2} $left={4} $gap={7}>
                  <Val $c="#e6464a">3,820.00</Val><XBox /><Ink>{mix('("買賣力道")')}</Ink>
                </Legend>
              </Plot>
              <Axis>
                <Ticks top={612} ys={[641, 674, 707, 740]} />
                <Lbl top={612} y={641} t="5,000.00" />
                <Lbl top={612} y={707} t="0.00" />
                <PriceTag top={612} y={650} t="3,820.00" bg={RED} />
              </Axis>
            </Pane>
            <Divider />
            <Pane $h={143} $axis={91}>
              <Plot>
                <Chart viewBox="10 762 1185 143">
                  <g strokeWidth="2" shapeRendering="crispEdges">
                    <path d={chipsA.up} stroke={RED} />
                    <path d={chipsA.dn} stroke={GREEN} />
                  </g>
                </Chart>
                <Legend $top={2} $left={4} $gap={7}>
                  <Val $c="#e6464a">2,151.00</Val><XBox /><Ink>{mix('("大戶籌碼")')}</Ink>
                </Legend>
              </Plot>
              <Axis>
                <Ticks top={762} ys={[863]} />
                <Lbl top={762} y={863} t="0.00" />
                <PriceTag top={762} y={814} t="2,151.00" bg={RED} />
              </Axis>
            </Pane>
            <TimeAxis $h={22}>
              {MAIN_TICKS.map((x) => <TimeTick key={x} style={{ left: x - 10 }} />)}
              <TimeCjk style={{ left: 28 }}>十一月</TimeCjk>
              {MAIN_TIME.map(([x, t]) => <TimeLabel key={x} style={{ left: x - 10 }}>{t}</TimeLabel>)}
            </TimeAxis>
          </Body>
        </Win>

        {/* top right window */}
        <Win $l={1293} $t={2} $w={612} $h={415} $pl={8} $pr={6} $z={2}>
          <WinTitle $pl={8} $pb={6}>
            <TitleDoc dim /><WinName>TXF1 - 5 分鐘 - Yuanta Futures64</WinName>
            <WinButtons />
          </WinTitle>
          <Body>
            <Pane $h={223} $axis={90}>
              <Plot>
                <Chart viewBox="1302 109 506 223">
                  <path d="M1780.500 109V332" stroke="#0000c8" strokeWidth="1" strokeDasharray="9 5" shapeRendering="crispEdges" />
                  <path d={poly(w2Up)} stroke="#0000ff" fill="none" strokeWidth="1" strokeDasharray="3 2" />
                  <path d={poly(w2Lo)} stroke="#0000ff" fill="none" strokeWidth="1" strokeDasharray="3 2" />
                  {w2Candles.map((c) => (
                    <g key={c.x} shapeRendering="crispEdges">
                      <path d={`M${c.x + 0.5} ${c.hi}V${c.lo}`} stroke="#808080" />
                      <rect x={c.x - 1} y={c.top} width="3.500" height={c.bot - c.top} fill={c.up ? RED : GREEN} />
                    </g>
                  ))}
                  <path d={poly(w2Mid)} stroke="#0000ff" fill="none" strokeWidth="2.200" />
                </Chart>
                <Legend $top={4} $left={10}>
                  <Muted>TXF1</Muted><TX />
                  <Muted>{mix('台指期')}</Muted><Muted>{mix('5 分鐘')}</Muted><ArrowBox /><RBox />
                  <Muted>{mix('成交價')}</Muted><Muted>TAIFEX</Muted><Muted>Yuanta Futures64</Muted><Muted>{mix('期貨')}</Muted>
                  <XBox /><Ink>{mix(INDI)}</Ink>
                </Legend>
              </Plot>
              <Axis>
                <Ticks top={109} ys={range(158, 26, 7)} />
                {[[158, '16,650'], [210, '16,600'], [262, '16,550'], [314, '16,500']].map(([y, t]) => <Lbl key={t} top={109} y={y as number} t={t as string} />)}
                <PriceTag top={109} y={186} t="16,616" bg={GREEN} />
                <PaneTool $left={58} $top={12}><PaneToolIcon /></PaneTool>
              </Axis>
            </Pane>
            <Divider />
            <Pane $h={76} $axis={90}>
              <Plot>
                <Chart viewBox="1302 335 506 76">
                  <path d="M1302 385.500H1780" stroke="#bdbdbd" />
                  <path d="M1778 385.500H1780" stroke="#d7282d" />
                </Chart>
                <Legend $top={2} $left={4} $gap={7}>
                  <XBox /><Ink>{mix('("正逆價差",  2,  901,  1330,  5,  10)')}</Ink>
                </Legend>
              </Plot>
              <Axis>
                <Ticks top={335} ys={[385, 397]} />
                <Lbl top={335} y={408} t="1.00" />
                <PriceTag top={335} y={378} t="0.00" bg="#bdbdbd" color="#f4f4f4" />
              </Axis>
            </Pane>
            <Divider />
            <Pane $h={52} $axis={90}>
              <Plot>
                <Legend $top={2} $left={4}>
                  <XBox /><Muted>TWSE</Muted><TX />
                  <Muted>{mix('加權指數')}</Muted><Muted>{mix('5 分鐘')}</Muted><ArrowBox /><RBox />
                  <Muted>{mix('成交價')}</Muted><Muted>TAISE</Muted><Muted>Yuanta Futures64</Muted><Muted>{mix('指數')}</Muted><Ink>{mix('量=0')}</Ink>
                </Legend>
              </Plot>
              <Axis>
                <PriceTag top={414} y={441} t="16,507.65" bg={GREEN} />
              </Axis>
            </Pane>
            <TimeAxis $h={20}>
              {[1319, 1399, 1479, 1570, 1660].map((x) => <TimeTick key={x} style={{ left: x - 1302 }} />)}
              {[[1321, '21:20'], [1401, '22:40'], [1481, '04'], [1572, '01:30'], [1661, '03:00']].map(([x, t]) => <TimeLabel key={t} style={{ left: (x as number) - 1302 }}>{t}</TimeLabel>)}
            </TimeAxis>
          </Body>
        </Win>

        {/* bottom right window */}
        <Win $l={1294} $t={413} $w={601} $h={520} $pl={5} $pr={7} $z={3}>
          <WinTitle $pl={5} $pb={7}>
            <TitleDoc dim /><WinName>TWSE - 1 日 - Yuanta Futures64</WinName>
            <WinButtons />
          </WinTitle>
          <Body>
            <Pane $h={249} $axis={90}>
              <Plot>
                <Chart viewBox="1300 519 498 249">
                  {w3Raw.map((c) => {
                    const x = Math.round(1290 + c[0] / 2.486);
                    const to = (v: number) => Math.round(540 + v / 3);
                    return (
                      <g key={c[0]} shapeRendering="crispEdges">
                        <path d={`M${x + 0.5} ${to(c[1])}V${to(c[2])}`} stroke="#808080" />
                        <rect x={x - 2} y={to(c[3])} width="5" height={Math.max(2, to(c[4]) - to(c[3]))} fill={c[5] === 'r' ? RED : GREEN} />
                      </g>
                    );
                  })}
                  {maSegs.map((s, i) => <path key={i} d={poly(z11(s.p))} stroke={s.c} fill="none" strokeWidth="1.700" />)}
                </Chart>
                <Legend $top={4} $left={10}>
                  <Muted>TWSE</Muted><TX />
                  <Muted>{mix('加權指數')}</Muted><Muted>{mix('1 日')}</Muted><ArrowBox /><RBox />
                  <Muted>{mix('成交價')}</Muted><Muted>TAISE</Muted><Muted>Yuanta Futures64</Muted><Muted>{mix('指數')}</Muted><Ink>{mix('量=0')}</Ink>
                  <XBox /><Ink>{mix('("開高低收線",  "Y"')}</Ink>
                </Legend>
              </Plot>
              <Axis>
                <Ticks top={519} ys={range(561, 21.1, 10)} />
                {[[582, '16,800.00'], [624, '16,600.00'], [666, '16,400.00'], [709, '16,200.00'], [751, '16,000.00']].map(([y, t]) => <Lbl key={t} top={519} y={y as number} t={t as string} />)}
                <PriceTag top={519} y={636} t="16,507.65" bg={GREEN} />
                <PaneTool $left={57} $top={12}><PaneToolIcon /></PaneTool>
              </Axis>
            </Pane>
            <Divider />
            <Pane $h={36} $axis={90}>
              <Plot>
                <Chart viewBox="1300 771 498 36">
                  {w3Xs.map((x, i) => (
                    <rect key={i} x={x - 2.500} y={750 + jellyY[i] / 3 - 1} width="5" height="3" fill={jellyG.has(i) ? GREEN : RED} shapeRendering="crispEdges" />
                  ))}
                </Chart>
                <Legend $top={2} $left={4} $gap={7}>
                  <XBox /><Ink>{mix('("水母線",  5,  20,  rgb(215, 40, 45),  rgb(33, 180, 66),  2,  "黃金交叉",  "死亡交叉")')}</Ink>
                </Legend>
              </Plot>
              <Axis>
                <PriceTag top={771} y={793} t="16,218.82" bg={GREEN} />
              </Axis>
            </Pane>
            <Divider />
            <Pane $h={47} $axis={90}>
              <Plot>
                <Chart viewBox="1300 810 498 47">
                  {w3Xs.map((x, i) => {
                    const t = 750 + volTops[i] / 3;
                    return <rect key={i} x={x - 2} y={t} width="4" height={855 - t} fill={volCols[i] === 'r' ? RED : GREEN} shapeRendering="crispEdges" />;
                  })}
                  <path d={poly(volMa)} stroke="#ff6a1e" fill="none" />
                </Chart>
                <Legend $top={2} $left={4} $gap={7}>
                  <XBox /><Ink>{mix('("成交量",  5,  2,  4000,  "超過",  "倍 ",  "MA均量",  "口")')}</Ink>
                </Legend>
              </Plot>
              <Axis>
                <PriceTag top={810} y={836} t="26,665,570.00" bg={RED} />
              </Axis>
            </Pane>
            <Divider />
            <Pane $h={51} $axis={90}>
              <Plot>
                <Chart viewBox="1300 860 498 51">
                  <path d="M1300 892.500H1766M1300 905.500H1766" stroke="#111" strokeDasharray="12 4" />
                  <path d="M1300 899.500H1766" stroke="#ff6a1e" />
                  <rect x="1602" y="888" width="3" height="5" fill={RED} /><rect x="1610" y="888" width="3" height="5" fill={RED} />
                  <rect x="1492" y="905" width="4" height="3" fill={GREEN} />
                  <path d={poly(cciGreen)} stroke="#0a8a0a" fill="none" />
                  <path d={poly(cciBlue)} stroke="#0000ff" fill="none" strokeWidth="2" />
                </Chart>
                <Legend $top={3} $left={4} $gap={7}>
                  <XBox /><Ink>{mix('("CCI",  14,  28,  100,  -100,  RGB(215, 40, 45),  RGB(33, 180, 66),  "N",  darkred,  darkgreen,  true,')}</Ink>
                </Legend>
              </Plot>
              <Axis>
                <TagCap style={{ top: 26 }} />
                <Tag $bg="#008000" style={{ top: 29, height: 16 }}><TagText style={{ top: 1 }}>36.50</TagText></Tag>
              </Axis>
            </Pane>
            <TimeAxis $h={20}>
              {[1345, 1546, 1745].map((x) => <TimeTick key={x} style={{ left: x - 1300 }} />)}
              <TimeCjk style={{ left: 48 }}>九月</TimeCjk>
              <TimeCjk style={{ left: 247 }}>十月</TimeCjk>
              <TimeCjk style={{ left: 448 }}>十一月</TimeCjk>
            </TimeAxis>
          </Body>
        </Win>
      </Mdi>
    </Page>
  );
}
